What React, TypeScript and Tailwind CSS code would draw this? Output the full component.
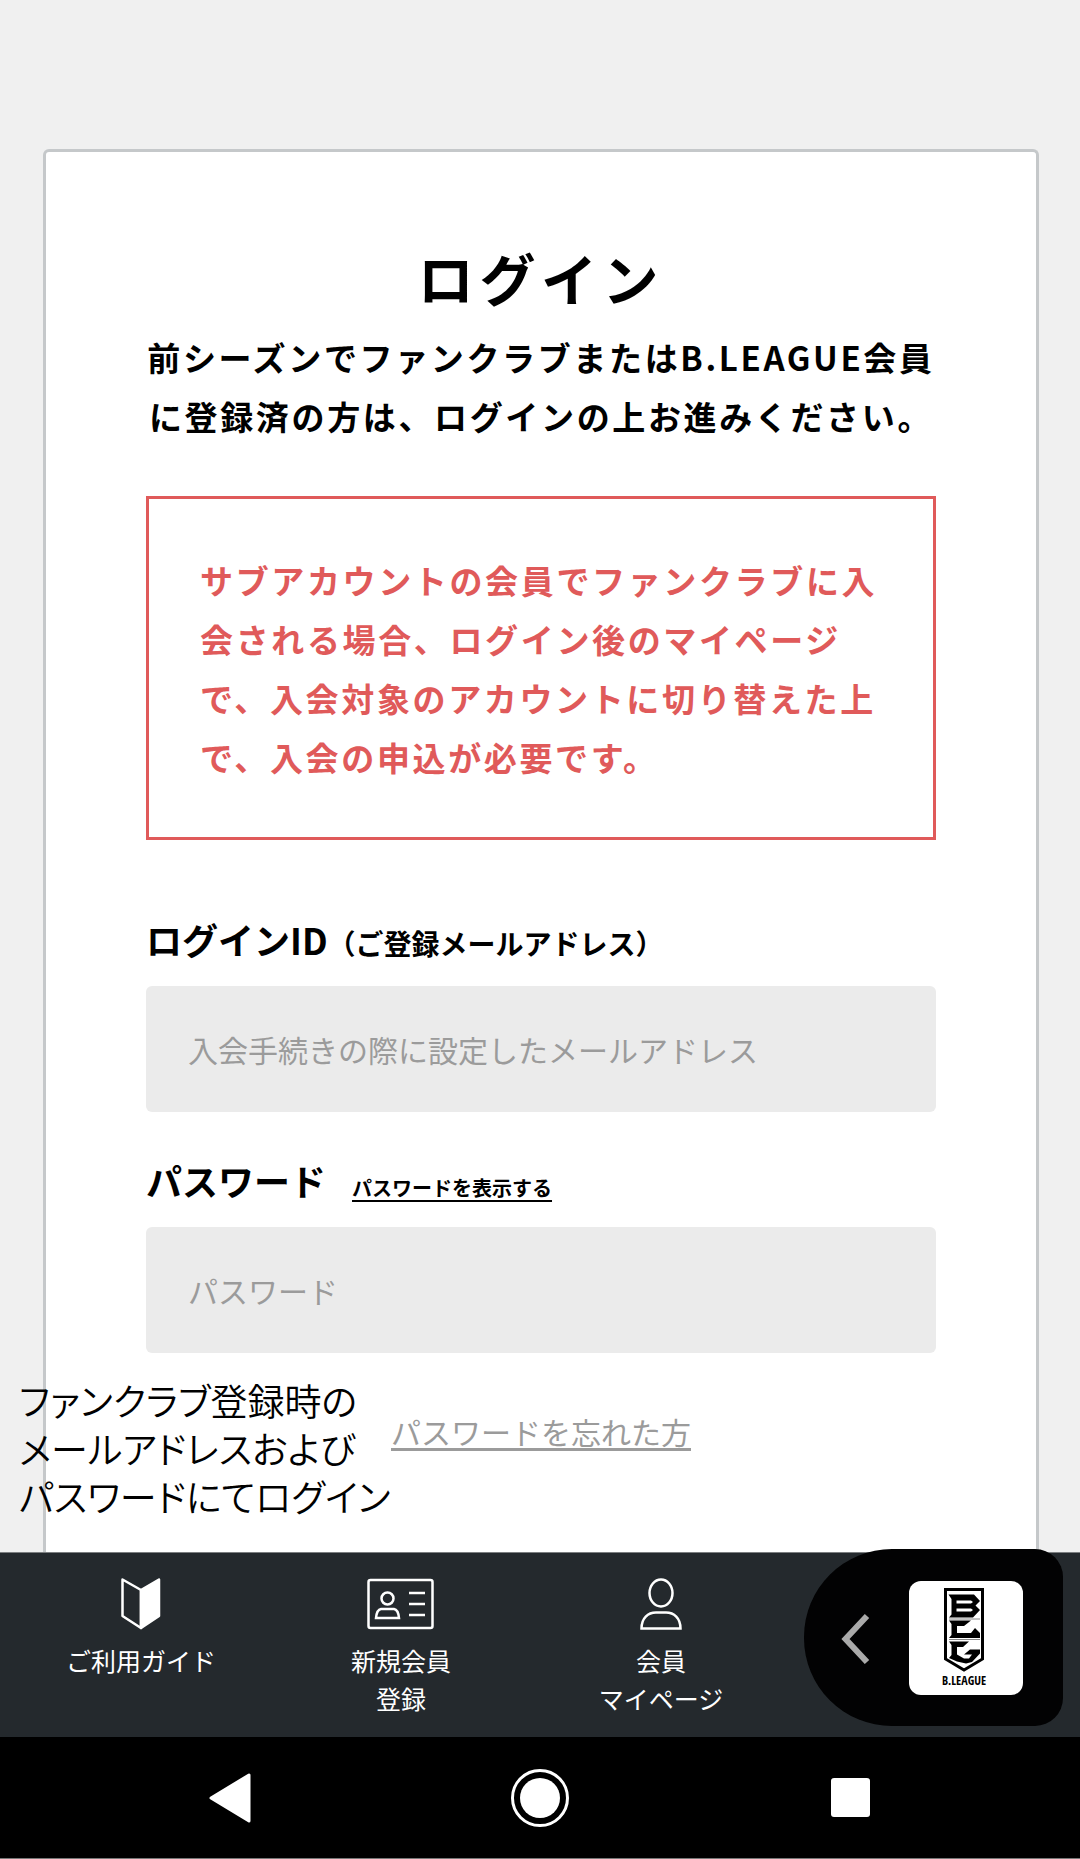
import { ReactNode } from "react";

interface TabLinkProps {
  lines: string[];
  icon: ReactNode;
}

const GuideIcon = () => (
  <svg width="40" height="52" viewBox="0 0 40 52" aria-hidden="true">
    <path d="M1.5 1.5 20 12v38L1.5 38Z" fill="none" stroke="#fff" strokeWidth="2.5" strokeLinejoin="round" />
    <path d="M38 1.5 20 12v38l18-12Z" fill="#fff" stroke="#fff" strokeWidth="2.5" strokeLinejoin="round" />
  </svg>
);

const CardIcon = () => (
  <svg width="68" height="52" viewBox="0 0 68 52" fill="none" stroke="#fff" strokeWidth="2.5" aria-hidden="true">
    <rect x="1.5" y="2" width="64" height="48" rx="2" />
    <circle cx="20.5" cy="20.5" r="6" />
    <path d="M9 40c.5-5.500 2-8.500 5-9h13c3 .5 4.500 3.500 5 9Z" />
    <path d="M42 15h16M42 26h16M42 37h16" />
  </svg>
);

const UserIcon = () => (
  <svg width="42" height="52" viewBox="0 0 42 52" fill="none" stroke="#fff" strokeWidth="2.5" aria-hidden="true">
    <ellipse cx="21" cy="15" rx="11.5" ry="13.5" />
    <path d="M1.5 50.500C1.500 40 8 34.500 16 34.500h10c8 0 14.500 5.500 14.500 16Z" />
  </svg>
);

const LeagueLogo = () => (
  <svg width="40" height="84" viewBox="0 0 40 84" aria-hidden="true">
    <path d="M1.500 1.500h37v69.500L20 82 1.500 71Z" fill="#fff" stroke="#000" strokeWidth="3" />
    <g fill="#000">
      <path
        fillRule="evenodd"
        d="M4.500 6.500H30l6 6.500-4.500 4.500L36 22l-7 7.500H5l2.500-3V11ZM12.500 12.500v3H27l2-1.500-2-1.500ZM12.500 20.500v3H27l2-1.500-2-1.500Z"
      />
      <path d="M5 32.500h22l-7 5.500h-7v7h14l4-5 5 5v5H5l2.500-3V36Z" />
      <path d="M5 53.500h20l-6 5.500h-6v7.500l7 4h5l3-4h-8l6-5h10v4l-8 8.500-6 1.500-9-2-8-3.500 2.500-3V57Z" />
    </g>
    <path d="M5 31h31M5 51.500h31" stroke="#888" strokeWidth="1" />
  </svg>
);

const TabLink = ({ lines, icon }: TabLinkProps) => (
  <a href="#" className="flex flex-col items-center gap-[11px] text-center text-[25px] leading-[38px] text-white">
    {icon}
    <span>
      {lines.map((line) => (
        <span key={line} className="block">
          {line}
        </span>
      ))}
    </span>
  </a>
);

const LoginForm = () => (
  <form className="mt-[69px]">
    <label htmlFor="login-id" className="block text-[36px] leading-[60px] font-bold">
      ログインID<span className="text-[28px]">（ご登録メールアドレス）</span>
    </label>
    <input
      id="login-id"
      type="email"
      placeholder="入会手続きの際に設定したメールアドレス"
      className="mt-[13px] h-[126px] w-full rounded-md bg-[#ebebeb] px-[42px] text-[30px] placeholder:text-[#9b9b9b]"
    />

    <div className="mt-[38px] flex items-baseline gap-[26px] font-bold">
      <label htmlFor="password" className="text-[36px] leading-[60px]">
        パスワード
      </label>
      <button type="button" className="text-[20px] leading-[24px] underline decoration-2 underline-offset-4">
        パスワードを表示する
      </button>
    </div>
    <input
      id="password"
      type="password"
      placeholder="パスワード"
      className="mt-[17px] h-[126px] w-full rounded-md bg-[#ebebeb] px-[42px] text-[30px] placeholder:text-[#9b9b9b]"
    />

    <p className="mt-[56px] text-center text-[30px] leading-[44px]">
      <a href="#" className="text-[#9b9b9b] underline decoration-3 underline-offset-4">
        パスワードを忘れた方
      </a>
    </p>
  </form>
);

const AppLauncher = () => (
  <div className="absolute -top-1 right-[17px] flex h-[177px] w-[259px] items-center justify-between rounded-l-[88px] rounded-r-[28px] bg-[#020203] pr-10 pl-9">
    <button type="button" aria-label="戻る">
      <svg width="30" height="52" viewBox="0 0 30 52" fill="none" stroke="#aaa" strokeWidth="6" aria-hidden="true">
        <path d="M27 4 5.500 27 27 50" />
      </svg>
    </button>
    <a href="#" className="flex h-[114px] w-[114px] flex-col items-center rounded-xl bg-white pt-[7px] pr-1">
      <LeagueLogo />
      <span className="font-['Open_Sans_Condensed','Liberation_Sans_Narrow',sans-serif] text-[12px] leading-[18px] font-extrabold text-black">
        B.LEAGUE
      </span>
    </a>
  </div>
);

const SystemBar = () => (
  <div className="grid h-[122px] grid-cols-3 place-items-center border-b border-[#777] bg-black px-[75px]">
    <button type="button" aria-label="Back">
      <svg width="42" height="50" viewBox="0 0 42 50" aria-hidden="true">
        <path d="M2 25 40 2v46Z" fill="#fff" stroke="#fff" strokeWidth="3" strokeLinejoin="round" />
      </svg>
    </button>
    <button type="button" aria-label="Home">
      <svg width="58" height="58" viewBox="0 0 58 58" aria-hidden="true">
        <circle cx="29" cy="29" r="27.5" fill="none" stroke="#fff" strokeWidth="3" />
        <circle cx="29" cy="29" r="20" fill="#fff" />
      </svg>
    </button>
    <button type="button" aria-label="Recents">
      <svg width="39" height="39" viewBox="0 0 39 39" aria-hidden="true">
        <rect width="39" height="39" rx="3" fill="#fff" />
      </svg>
    </button>
  </div>
);

export default function App() {
  return (
    <div
      lang="ja"
      className="flex min-h-screen flex-col bg-[#f0f0f0] font-['Noto_Sans_CJK_JP',sans-serif] text-black"
    >
      <main className="relative flex flex-1 flex-col pt-[149px] pr-[41px] pl-[43px]">
        <section className="flex-1 rounded-t-md border-3 border-b-0 border-[#c5c8ca] bg-white px-[100px] pt-[82px]">
          <h1 className="mb-2 text-center text-[56px] leading-[86px] font-bold tracking-widest">ログイン</h1>
          <p className="-mx-2 text-center text-[33px] leading-[59px] font-bold tracking-[0.08em]">
            前シーズンでファンクラブまたはB.LEAGUE会員
            <br />
            に登録済の方は、ログインの上お進みください。
          </p>

          <div className="mt-[50px] border-3 border-[#e05a5a] px-[51px] pt-[52px] pb-[50px]">
            <p className="text-[33px] leading-[59px] font-bold tracking-[0.08em] text-[#e05a5a]">
              サブアカウントの会員でファンクラブに入会される場合、ログイン後のマイページで、入会対象のアカウントに切り替えた上で、入会の申込が必要です。
            </p>
          </div>

          <LoginForm />
        </section>

        <p className="absolute bottom-[32px] left-[19px] text-[37px] leading-[48px] font-[350] [font-feature-settings:'palt']">
          ファンクラブ登録時の
          <br />
          メールアドレスおよび
          <br />
          パスワードにてログイン
        </p>
      </main>

      <footer>
        <nav className="relative grid h-[185px] grid-cols-4 border-t border-[#7b7e80] bg-[#24292d] pt-[25px] pr-[29px] pl-[11px]">
          <TabLink lines={["ご利用ガイド"]} icon={<GuideIcon />} />
          <TabLink lines={["新規会員", "登録"]} icon={<CardIcon />} />
          <TabLink lines={["会員", "マイページ"]} icon={<UserIcon />} />
          <AppLauncher />
        </nav>
        <SystemBar />
      </footer>
    </div>
  );
}
